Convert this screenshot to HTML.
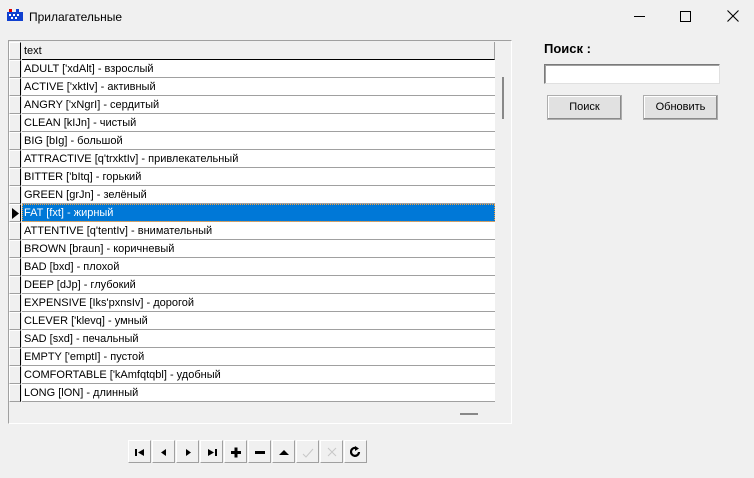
<!DOCTYPE html><html><head><meta charset="utf-8"><style>
body{margin:0;width:754px;height:478px;background:#f0f0f0;position:relative;overflow:hidden;font-family:"Liberation Sans",Arial,sans-serif;}
.a{position:absolute;}
.title{left:0;top:0;width:754px;height:34px;background:#f0f0f0;}
.grid{left:8px;top:40px;width:504px;height:384px;border:1px solid #a0a0a0;border-right-color:#fff;border-bottom-color:#fff;box-sizing:border-box;background:#f0f0f0;}
.row{position:absolute;left:9px;width:486px;height:18px;font-size:11px;}
.ind{position:absolute;left:0;top:0;width:12px;background:#f0f0f0;border-right:1px solid #000;border-bottom:1px solid #a0a0a0;border-left:1px solid #fff;border-top:1px solid #fff;box-sizing:border-box;height:18px;}
.cell{position:absolute;left:13px;top:0;right:0;height:17px;background:#fff;border-bottom:1px solid #a0a0a0;line-height:19px;padding-left:2px;white-space:nowrap;}
.nb{position:absolute;top:440px;width:23px;height:23px;border:1px solid #fff;border-right-color:#a0a0a0;border-bottom-color:#a0a0a0;box-sizing:border-box;background:#f0f0f0;}
.nb svg{position:absolute;left:5px;top:5px}
.btn{position:absolute;height:25px;border:1px solid #adadad;background:#e1e1e1;font-size:11px;text-align:center;line-height:23px;box-sizing:border-box;box-shadow:inset -1px -1px #8a8a8a,inset 1px 1px #fff;}
</style></head><body>
<div class="a title">
<svg class="a" style="left:7px;top:9px" width="16" height="14"><rect x="0" y="3" width="16" height="9" fill="#1040d0"/><g fill="#fff"><rect x="2" y="5" width="2" height="2"/><rect x="6" y="5" width="2" height="2"/><rect x="10" y="5" width="2" height="2"/><rect x="4" y="8" width="2" height="2"/><rect x="8" y="8" width="2" height="2"/></g><rect x="2" y="0" width="3" height="3" fill="#d00"/><rect x="9" y="0" width="3" height="3" fill="#1040d0"/></svg>
<div class="a" style="left:29px;top:10px;font-size:12px;color:#000">Прилагательные</div>
<div class="a" style="left:634px;top:16px;width:11px;height:1px;background:#000"></div>
<div class="a" style="left:680px;top:11px;width:9px;height:9px;border:1px solid #000"></div>
<svg class="a" style="left:727px;top:10px" width="12" height="12"><path d="M0.5 0.5L11.5 11.5M11.5 0.5L0.5 11.5" stroke="#000" stroke-width="1.1"/></svg>
</div>
<div class="a grid"></div>
<div class="row" style="top:42px"><div class="ind"></div><div class="cell" style="background:#f0f0f0;border-bottom:1px solid #000;border-right:1px solid #a0a0a0">text</div></div>
<div id="rows"></div>
<div class="a" style="left:495px;top:42px;width:16px;height:360px;background:#f0f0f0"></div>
<div class="a" style="left:502px;top:77px;width:2px;height:42px;background:#888"></div>
<div class="a" style="left:460px;top:413px;width:18px;height:2px;background:#888"></div>
<div class="a" style="left:544px;top:41px;font-size:13px;font-weight:bold">Поиск :</div>
<div class="a" style="left:544px;top:64px;width:176px;height:20px;background:#fff;border:1px solid #7a7a7a;border-right-color:#e0e0e0;border-bottom-color:#e0e0e0;box-sizing:border-box;box-shadow:inset 1px 1px #a0a0a0"></div>
<div class="btn" style="left:547px;top:95px;width:75px">Поиск</div>
<div class="btn" style="left:643px;top:95px;width:75px">Обновить</div>
<div class="nb" style="left:128px"><svg width="12" height="12"><rect x="1" y="3" width="2" height="7"/><path d="M10 3L4 6.5L10 10Z"/></svg></div>
<div class="nb" style="left:152px"><svg width="12" height="12"><path d="M8 3L3 6.5L8 10Z"/></svg></div>
<div class="nb" style="left:176px"><svg width="12" height="12"><path d="M4 3L9 6.5L4 10Z"/></svg></div>
<div class="nb" style="left:200px"><svg width="12" height="12"><path d="M2 3L8 6.5L2 10Z"/><rect x="9" y="3" width="2" height="7"/></svg></div>
<div class="nb" style="left:224px"><svg width="12" height="12"><rect x="1" y="5" width="10" height="3"/><rect x="4.5" y="1.5" width="3" height="10"/></svg></div>
<div class="nb" style="left:248px"><svg width="12" height="12"><rect x="1" y="5" width="10" height="3"/></svg></div>
<div class="nb" style="left:272px"><svg width="12" height="12"><path d="M1 9L6 4L11 9Z"/></svg></div>
<div class="nb" style="left:296px"><svg width="12" height="12"><path d="M1 8L4 11L11 3" stroke="#c8c8c8" fill="none"/></svg></div>
<div class="nb" style="left:320px"><svg width="12" height="12"><path d="M2 2L10 10M10 2L2 10" stroke="#c8c8c8" fill="none"/></svg></div>
<div class="nb" style="left:344px"><svg width="12" height="12"><path d="M9 6A4 4 0 1 1 6 2" stroke="#000" stroke-width="2.2" fill="none"/><path d="M5 0L9 2.5L5 5Z"/></svg></div>
<script>
var w=["ADULT ['xdAlt] - взрослый","ACTIVE ['xktIv] - активный","ANGRY ['xNgrI] - сердитый","CLEAN [kIJn] - чистый","BIG [bIg] - большой","ATTRACTIVE [q'trxktIv] - привлекательный","BITTER ['bItq] - горький","GREEN [grJn] - зелёный","FAT [fxt] - жирный","ATTENTIVE [q'tentIv] - внимательный","BROWN [braun] - коричневый","BAD [bxd] - плохой","DEEP [dJp] - глубокий","EXPENSIVE [Iks'pxnsIv] - дорогой","CLEVER ['klevq] - умный","SAD [sxd] - печальный","EMPTY ['emptI] - пустой","COMFORTABLE ['kAmfqtqbl] - удобный","LONG [lON] - длинный"];
var h="";w.forEach(function(t,i){var y=60+i*18;var sel=i==8;
h+='<div class="row" style="top:'+y+'px"><div class="ind">'+(sel?'<svg style="position:absolute;left:2px;top:3px" width="8" height="11"><path d="M0 0L7 5.5L0 11Z"/></svg>':'')+'</div><div class="cell" style="'+(sel?'background:#0078d7;color:#fff;outline:1px dotted #f0a040;outline-offset:-1px':'')+'">'+t+'</div></div>';});
document.getElementById("rows").innerHTML=h;
</script>
</body></html>
